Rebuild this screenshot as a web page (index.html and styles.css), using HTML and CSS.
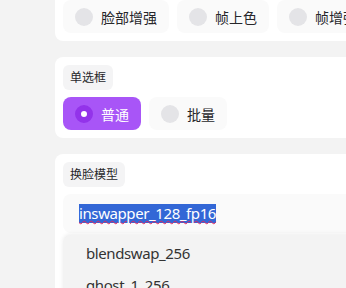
FILE: index.html
```html
<!DOCTYPE html>
<html>
<head>
    <title>Face Swap Options</title>
    <link rel="stylesheet" href="styles.css">
</head>
<body>
    <div class="page">
        <!-- enhancers -->
        <div class="card">
            <div class="chips">
                <div class="chip"><span class="dot"></span>脸部增强</div>
                <div class="chip"><span class="dot"></span>帧上色</div>
                <div class="chip"><span class="dot"></span>帧增强</div>
            </div>
        </div>

        <!-- mode -->
        <div class="card">
            <div class="label">单选框</div>
            <div class="chips">
                <div class="chip active"><span class="dot"></span>普通</div>
                <div class="chip"><span class="dot"></span>批量</div>
            </div>
        </div>

        <!-- model -->
        <div class="card">
            <div class="label">换脸模型</div>
            <div class="select">
                <span class="picked">inswapper_128_fp16</span>
            </div>
            <div class="options">
                <div class="option">blendswap_256</div>
                <div class="option">ghost_1_256</div>
            </div>
        </div>
    </div>
</body>
</html>
```

FILE: styles.css
```css
body { margin: 0; background: #f3f3f3; overflow: hidden; font-family: "Noto Sans", "Noto Sans CJK SC", sans-serif; color: #27272a; }
.page { margin-top: -8px; padding-left: 55px; width: 420px; }
.card { background: #fff; border-radius: 8px; padding: 8px; margin-bottom: 16px; }
.chips { display: flex; gap: 8px; }
.chip { height: 33px; padding: 0 12px; background: #fafafa; border-radius: 8px; display: flex; align-items: center; gap: 8px; font-size: 14px; white-space: nowrap; }
.dot { width: 18px; height: 18px; border-radius: 50%; background: #e4e4e7; box-sizing: border-box; }
.chip.active { background: #a855f7; color: #fff; }
.chip.active .dot { background: #fff; border: 6px solid #9333ea; }
.label { display: inline-block; background: #f4f4f5; border-radius: 6px; padding: 0 7px; height: 25px; line-height: 25px; font-size: 12px; margin-bottom: 7px; }
.select { height: 39px; background: #fafafa; border-radius: 8px; padding-left: 16px; display: flex; align-items: center; font-size: 15px; letter-spacing: -0.4px; }
.picked { background: #3367d6; color: #fff; line-height: 19px; text-decoration: underline wavy #e0245e; text-decoration-thickness: 1px; }
.options { margin-top: 2px; background: #f3f3f3; border-radius: 8px; box-shadow: 0 -1px 4px rgba(0,0,0,0.08); padding-top: 2px; font-size: 15px; letter-spacing: -0.4px; color: #333; }
.option { height: 32px; line-height: 32px; padding-left: 23px; }
```
